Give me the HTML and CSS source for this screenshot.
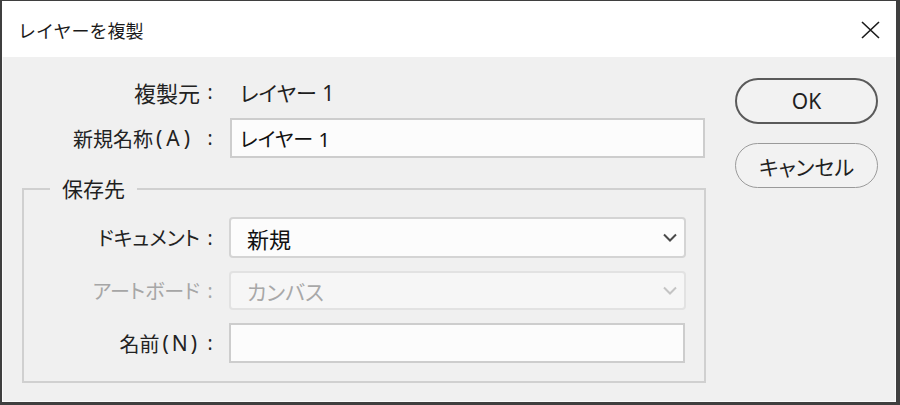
FILE: index.html
```html
<!DOCTYPE html>
<html lang="ja">
<head>
<meta charset="utf-8">
<title>レイヤーを複製</title>
<link rel="stylesheet" href="styles.css">
</head>
<body>
<div class="dialog">
  <div class="titlebar">
    <span class="title">レイヤーを複製</span>
    <svg class="close" width="19" height="18" viewBox="0 0 19 18"><path d="M1 1 L18 17 M18 1 L1 17" stroke="#1a1a1a" stroke-width="1.6" fill="none"/></svg>
  </div>
  <div class="body">
    <div class="main">
      <div class="row row-source">
        <span class="label label-big">複製元<span class="colon">:</span></span>
        <span class="value">レイヤー 1</span>
      </div>
      <div class="row row-name">
        <label class="label label-name">新規名称<span class="acc acc-a">(A)</span><span class="colon">:</span></label>
        <div class="input input-wide">レイヤー 1</div>
      </div>
      <fieldset class="group">
        <legend>保存先</legend>
        <div class="row row-doc">
          <label class="label label-group">ドキュメント<span class="colon">:</span></label>
          <div class="select">
            <span>新規</span>
            <svg class="chev" width="14" height="9" viewBox="0 0 14 9"><path d="M1 1.5 L7 7.5 L13 1.5" stroke="#4a4a4a" stroke-width="2" fill="none"/></svg>
          </div>
        </div>
        <div class="row row-art disabled">
          <label class="label label-group">アートボード<span class="colon">:</span></label>
          <div class="select select-disabled">
            <span>カンバス</span>
            <svg class="chev" width="14" height="9" viewBox="0 0 14 9"><path d="M1 1.5 L7 7.5 L13 1.5" stroke="#c4c4c4" stroke-width="2" fill="none"/></svg>
          </div>
        </div>
        <div class="row row-fname">
          <label class="label label-group">名前<span class="acc">(N)</span><span class="colon">:</span></label>
          <div class="input input-group"></div>
        </div>
      </fieldset>
    </div>
    <div class="buttons">
      <button class="btn btn-default">OK</button>
      <button class="btn">キャンセル</button>
    </div>
  </div>
</div>
</body>
</html>
```

FILE: styles.css
```css
* { box-sizing: border-box; }
html, body { margin: 0; padding: 0; }
body {
  width: 900px;
  height: 405px;
  overflow: hidden;
  font-family: "Noto Sans", "Noto Sans CJK JP", sans-serif;
  font-feature-settings: "palt";
  color: #1f1f1f;
  background: #3f3f3f;
}
.dialog {
  width: 900px;
  height: 405px;
  display: flex;
  flex-direction: column;
  border-style: solid;
  border-color: #3f3f3f;
  border-width: 1px 4px 3px 2px;
  background: #f0f0f0;
}
.titlebar {
  flex: none;
  height: 56px;
  background: #ffffff;
  display: flex;
  align-items: center;
  justify-content: space-between;
  padding: 0 16px 0 16px;
}
.title {
  font-size: 18px;
  font-feature-settings: normal;
  color: #1a1a1a;
  padding-top: 1px;
}
.close { display: block; margin-top: 2px; }
.body {
  flex: 1;
  display: flex;
  box-shadow: inset 1px 0 0 #fbfbfb, inset -1px -1px 0 #fbfbfb;
}
.main {
  width: 706px;
  display: flex;
  flex-direction: column;
  padding-top: 15px;
}
.row {
  display: flex;
  align-items: center;
  height: 40px;
}
.label {
  width: 218px;
  flex: none;
  display: flex;
  justify-content: flex-end;
  align-items: center;
  font-size: 19px;
  color: #222;
}
.label-big { font-size: 22px; }
.label-name { font-size: 20px; }
.acc {
  font-size: 21px;
  letter-spacing: 3px;
  padding-left: 3px;
}
.acc-a {
  letter-spacing: 4px;
  padding-right: 6px;
}
.colon {
  display: inline-block;
  width: 20px;
  text-align: center;
  font-size: 19px;
  letter-spacing: 0;
}
.value {
  margin-left: 20px;
  font-size: 21px;
}
.row-name { margin-top: 6px; }
.input {
  height: 40px;
  background: #fcfcfc;
  border: 2px solid #cdcdcd;
  display: flex;
  align-items: center;
  padding-left: 8px;
  font-size: 20px;
  color: #111;
}
.input-wide { width: 475px; margin-left: 10px; }
.group {
  min-width: 0;
  margin: 16px 0 0 20px;
  width: 684px;
  padding: 13px 0 18px 0;
  border: 2px solid #d0d0d0;
}
.group legend {
  margin-left: 26px;
  padding: 0 12px;
  font-size: 21px;
  line-height: 30px;
  color: #1f1f1f;
}
.label-group { width: 196px; font-size: 20px; }
.select, .input-group { margin-left: 9px; }
.select {
  width: 457px;
  height: 41px;
  display: flex;
  align-items: center;
  justify-content: space-between;
  padding: 0 7px 0 16px;
  border: 2px solid #d4d4d4;
  border-radius: 4px;
  background: #fcfcfc;
  font-size: 22px;
  color: #111;
}
.row-doc { height: 41px; }
.row-art { height: 39px; margin-top: 13px; }
.row-fname { margin-top: 13px; }
.select-disabled {
  height: 39px;
  background: #f6f6f6;
  border-color: #e2e2e2;
  color: #a8a8a8;
  font-size: 21px;
}
.disabled .label { color: #a6a6a6; }
.input-group { width: 456px; }
.chev { display: block; }
.buttons {
  margin-left: 27px;
  padding-top: 21px;
  display: flex;
  flex-direction: column;
  gap: 19px;
}
.btn {
  width: 143px;
  height: 45px;
  border-radius: 23px;
  border: 1.5px solid #9a9a9a;
  background: #f2f2f2;
  font-family: "Noto Sans", "Noto Sans CJK JP", sans-serif;
  font-feature-settings: "palt";
  font-size: 21px;
  color: #1f1f1f;
  padding: 0;
}
.btn-default {
  border: 2px solid #5a5a5a;
  height: 46px;
}
```
